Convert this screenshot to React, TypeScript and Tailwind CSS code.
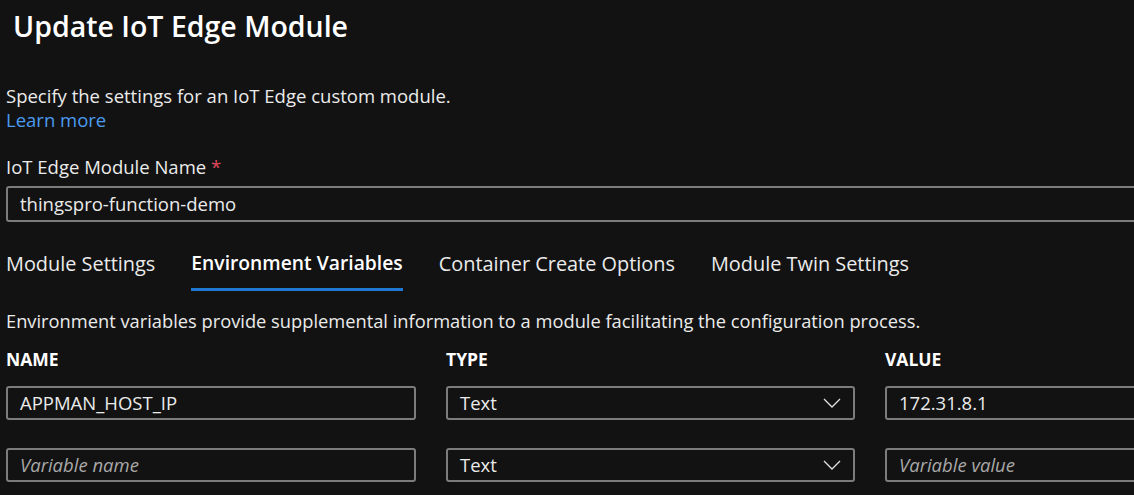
import React from "react";

const Chevron = () => (
  <svg width="18" height="10" viewBox="0 0 18 10" fill="none" className="shrink-0">
    <path d="M1 1 L9 9 L17 1" stroke="#e0e0e0" strokeWidth="1.3" />
  </svg>
);

const boxCls =
  "h-[34px] border-2 border-[#7c7c7c] rounded-[3px] flex items-center px-[12px] bg-[#121212] text-[18.5px]";

export default function App() {
  return (
    <div
      className="w-[1134px] h-[495px] overflow-hidden bg-[#121212] text-[#ebebeb]"
      style={{ fontFamily: '"Open Sans", "Noto Sans", sans-serif' }}
    >
      <div className="w-[1400px] pl-[6px]">
        <h1 className="text-[28.5px] font-semibold text-white pl-[7px] pt-[6px] h-[46px] leading-[40px]">
          Update IoT Edge Module
        </h1>
        <p className="mt-[38px] text-[18.5px] leading-[24px]">
          Specify the settings for an IoT Edge custom module.
        </p>
        <a className="text-[18.5px] leading-[24px] text-[#4a9bef] block">Learn more</a>
        <div className="mt-[23px] text-[18.5px] leading-[24px]">
          IoT Edge Module Name <span className="text-[#e0495d]">*</span>
        </div>
        <div className={boxCls + " mt-[7px] w-[1200px] h-[36px]"}>thingspro-function-demo</div>
        <div className="flex gap-[36px] mt-[17px] text-[19.9px]">
          <div className="h-[49px] flex items-center">Module Settings</div>
          <div className="flex flex-col">
            <div className="h-[49px] flex items-center font-semibold text-white text-[19.3px]">
              Environment Variables
            </div>
            <div className="h-[3px] bg-[#1f78d1]" />
          </div>
          <div className="h-[49px] flex items-center">Container Create Options</div>
          <div className="h-[49px] flex items-center">Module Twin Settings</div>
        </div>
        <p className="mt-[18px] text-[18.3px] leading-[24px]">
          Environment variables provide supplemental information to a module facilitating the configuration process.
        </p>
        <div className="grid grid-cols-[410px_409px_410px] gap-x-[30px] mt-[14px]">
          <div className="text-[17.5px] font-bold text-white leading-[24px]">NAME</div>
          <div className="text-[17.5px] font-bold text-white leading-[24px]">TYPE</div>
          <div className="text-[17.5px] font-bold text-white leading-[24px]">VALUE</div>

          <div className={boxCls + " mt-[15px]"}>APPMAN_HOST_IP</div>
          <div className={boxCls + " mt-[15px] justify-between"}>
            <span>Text</span>
            <Chevron />
          </div>
          <div className={boxCls + " mt-[15px]"}>172.31.8.1</div>

          <div className={boxCls + " mt-[28px] italic text-[#a8a8a8]"}>Variable name</div>
          <div className={boxCls + " mt-[28px] justify-between"}>
            <span>Text</span>
            <Chevron />
          </div>
          <div className={boxCls + " mt-[28px] italic text-[#a8a8a8]"}>Variable value</div>
        </div>
      </div>
    </div>
  );
}
